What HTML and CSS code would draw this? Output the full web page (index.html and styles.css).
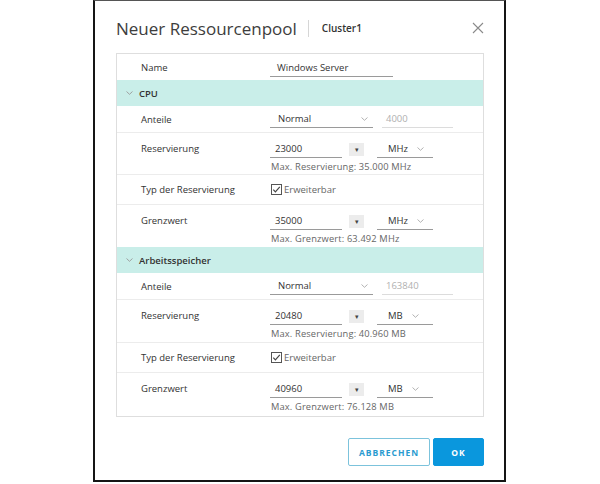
FILE: index.html
```html
<!DOCTYPE html>
<html lang="de">
<head>
<meta charset="utf-8">
<title>Neuer Ressourcenpool</title>
<link rel="stylesheet" href="styles.css">
</head>
<body>
<div class="frame">
  <div class="header">
    <h1 class="title">Neuer Ressourcenpool</h1>
    <span class="sep"></span>
    <span class="cluster">Cluster1</span>
    <svg class="close" width="12" height="12" viewBox="0 0 12 12"><path d="M1 1L11 11M11 1L1 11" stroke="#8a8a8a" stroke-width="1.1" fill="none"/></svg>
  </div>

  <div class="panel">
    <div class="row row-name">
      <span class="label">Name</span>
      <div class="ctrl"><span class="input name-input">Windows Server</span></div>
    </div>

    <div class="band"><svg class="chev" width="7" height="4" viewBox="0 0 7 4"><path d="M0.5 0.5L3.5 3.3L6.5 0.5" stroke="#9a9a9a" stroke-width="0.9" fill="none"/></svg><span>CPU</span></div>

    <div class="row row-short">
      <span class="label">Anteile</span>
      <div class="ctrl line">
        <span class="input select share">Normal<svg class="chev-sm" width="7" height="4" viewBox="0 0 7 4"><path d="M0.5 0.5L3.5 3.3L6.5 0.5" stroke="#aaa" stroke-width="0.9" fill="none"/></svg></span>
        <span class="input disabled num">4000</span>
      </div>
    </div>
    <div class="row row-tall">
      <span class="label">Reservierung</span>
      <div class="ctrl">
        <div class="line">
          <span class="input value">23000</span>
          <span class="spin">&#9662;</span>
          <span class="input select unit">MHz<svg class="chev-sm" width="7" height="4" viewBox="0 0 7 4"><path d="M0.5 0.5L3.5 3.3L6.5 0.5" stroke="#aaa" stroke-width="0.9" fill="none"/></svg></span>
        </div>
        <span class="help">Max. Reservierung: 35.000 MHz</span>
      </div>
    </div>
    <div class="row row-mid">
      <span class="label">Typ der Reservierung</span>
      <div class="ctrl line">
        <span class="check"><svg width="11" height="11" viewBox="0 0 11 11"><rect x="0.5" y="0.5" width="10" height="10" fill="#fff" stroke="#555"/><path d="M2.3 5.6L4.4 7.8L8.8 2.8" stroke="#444" stroke-width="1.2" fill="none"/></svg></span>
        <span class="check-text">Erweiterbar</span>
      </div>
    </div>
    <div class="row row-tall last">
      <span class="label">Grenzwert</span>
      <div class="ctrl">
        <div class="line">
          <span class="input value">35000</span>
          <span class="spin">&#9662;</span>
          <span class="input select unit">MHz<svg class="chev-sm" width="7" height="4" viewBox="0 0 7 4"><path d="M0.5 0.5L3.5 3.3L6.5 0.5" stroke="#aaa" stroke-width="0.9" fill="none"/></svg></span>
        </div>
        <span class="help">Max. Grenzwert: 63.492 MHz</span>
      </div>
    </div>

    <div class="band"><svg class="chev" width="7" height="4" viewBox="0 0 7 4"><path d="M0.5 0.5L3.5 3.3L6.5 0.5" stroke="#9a9a9a" stroke-width="0.9" fill="none"/></svg><span>Arbeitsspeicher</span></div>

    <div class="row row-short mem-first">
      <span class="label">Anteile</span>
      <div class="ctrl line">
        <span class="input select share">Normal<svg class="chev-sm" width="7" height="4" viewBox="0 0 7 4"><path d="M0.5 0.5L3.5 3.3L6.5 0.5" stroke="#aaa" stroke-width="0.9" fill="none"/></svg></span>
        <span class="input disabled num">163840</span>
      </div>
    </div>
    <div class="row row-tall row-tall-mem">
      <span class="label">Reservierung</span>
      <div class="ctrl">
        <div class="line">
          <span class="input value">20480</span>
          <span class="spin">&#9662;</span>
          <span class="input select unit">MB<svg class="chev-sm" width="7" height="4" viewBox="0 0 7 4"><path d="M0.5 0.5L3.5 3.3L6.5 0.5" stroke="#aaa" stroke-width="0.9" fill="none"/></svg></span>
        </div>
        <span class="help">Max. Reservierung: 40.960 MB</span>
      </div>
    </div>
    <div class="row row-mid">
      <span class="label">Typ der Reservierung</span>
      <div class="ctrl line">
        <span class="check"><svg width="11" height="11" viewBox="0 0 11 11"><rect x="0.5" y="0.5" width="10" height="10" fill="#fff" stroke="#555"/><path d="M2.3 5.6L4.4 7.8L8.8 2.8" stroke="#444" stroke-width="1.2" fill="none"/></svg></span>
        <span class="check-text">Erweiterbar</span>
      </div>
    </div>
    <div class="row row-tall row-tall-end last">
      <span class="label">Grenzwert</span>
      <div class="ctrl">
        <div class="line">
          <span class="input value">40960</span>
          <span class="spin">&#9662;</span>
          <span class="input select unit">MB<svg class="chev-sm" width="7" height="4" viewBox="0 0 7 4"><path d="M0.5 0.5L3.5 3.3L6.5 0.5" stroke="#aaa" stroke-width="0.9" fill="none"/></svg></span>
        </div>
        <span class="help">Max. Grenzwert: 76.128 MB</span>
      </div>
    </div>
  </div>

  <div class="footer">
    <button class="btn btn-outline">ABBRECHEN</button>
    <button class="btn btn-primary">OK</button>
  </div>
</div>
</body>
</html>
```
FILE: styles.css
```css
html, body {
  margin: 0;
  padding: 0;
  background: #fff;
}
body {
  width: 600px;
  height: 484px;
  font-family: "Open Sans", "Liberation Sans", sans-serif;
  color: #333;
}
.frame {
  box-sizing: border-box;
  margin-left: 93px;
  width: 413px;
  height: 482px;
  border: 2px solid #151515;
  border-top: 1px solid #555;
  padding: 0 20px 0 21px;
  display: flex;
  flex-direction: column;
}
.header {
  height: 52px;
  display: flex;
  align-items: center;
  padding-top: 2px;
  box-sizing: border-box;
}
.title {
  margin: 0;
  font-size: 17px;
  font-weight: 400;
  color: #3d3d3d;
}
.sep {
  width: 1px;
  height: 17px;
  background: #d6d6d6;
  margin: 0 13px 0 11px;
}
.cluster {
  font-size: 10px;
  font-weight: 600;
  color: #333;
}
.close {
  margin-left: auto;
  margin-right: 0;
}
.panel {
  border: 1px solid #dedede;
  display: flex;
  flex-direction: column;
}
.row {
  display: flex;
  border-bottom: 1px solid #ececec;
  box-sizing: border-box;
}
.row.last { border-bottom: none; }
.label {
  width: 153px;
  padding-left: 24px;
  box-sizing: border-box;
  font-size: 9.5px;
  color: #333;
  flex-shrink: 0;
}
.row-name { height: 26px; align-items: center; border-bottom: none; }
.row-short { height: 27px; align-items: center; }
.row-mid { height: 30px; align-items: center; }
.row-tall { height: 42px; padding-top: 7px; }
.row-tall-mem { height: 43px; }
.row-tall-end { height: 43px; }
.mem-first { height: 27px; }
.row-tall .label { padding-top: 2px; }
.ctrl {
  display: flex;
  flex-direction: column;
  font-size: 9.5px;
}
.line {
  display: flex;
  flex-direction: row;
  align-items: center;
}
.input {
  display: flex;
  align-items: center;
  box-sizing: border-box;
  height: 18px;
  border-bottom: 1px solid #9a9a9a;
  color: #333;
  font-size: 9.5px;
}
.name-input {
  width: 123px;
  padding-left: 7px;
  margin-top: 2px;
}
.share {
  width: 103px;
  padding-left: 8px;
}
.chev-sm {
  margin-left: auto;
  margin-right: 5px;
}
.disabled {
  color: #b0b0b0;
  border-bottom-color: #dcdcdc;
}
.num {
  width: 71px;
  margin-left: 9px;
  padding-left: 4px;
}
.value {
  width: 72px;
  padding-left: 5px;
}
.spin {
  width: 15px;
  height: 13px;
  margin-left: 7px;
  background: #ececec;
  color: #444;
  font-size: 7px;
  display: flex;
  align-items: center;
  justify-content: center;
}
.unit {
  width: 56px;
  margin-left: 13px;
  padding-left: 11px;
}
.unit .chev-sm { margin-left: 9px; }
.help {
  font-size: 9.3px;
  color: #666;
  margin-top: 2px;
  padding-left: 1px;
  letter-spacing: 0.15px;
}
.check {
  display: flex;
  margin-left: 1px;
}
.check-text {
  margin-left: 2px;
  color: #666;
  font-size: 9.5px;
}
.band {
  height: 26px;
  background: #c9eee9;
  display: flex;
  align-items: center;
  font-size: 9.5px;
  font-weight: 600;
  color: #333;
  padding-left: 9px;
}
.chev {
  margin-right: 6px;
}
.footer {
  display: flex;
  justify-content: flex-end;
  gap: 3px;
  margin-top: 21px;
}
.btn {
  height: 28px;
  border-radius: 2px;
  font-family: "Open Sans", "Liberation Sans", sans-serif;
  font-size: 8.5px;
  font-weight: 700;
  letter-spacing: 1px;
  cursor: pointer;
}
.btn-outline {
  width: 82px;
  background: #fff;
  border: 1px solid #7cc3dc;
  color: #2a9bd0;
}
.btn-primary {
  width: 51px;
  background: #0a97dd;
  border: 1px solid #0a97dd;
  color: #fff;
}
```
